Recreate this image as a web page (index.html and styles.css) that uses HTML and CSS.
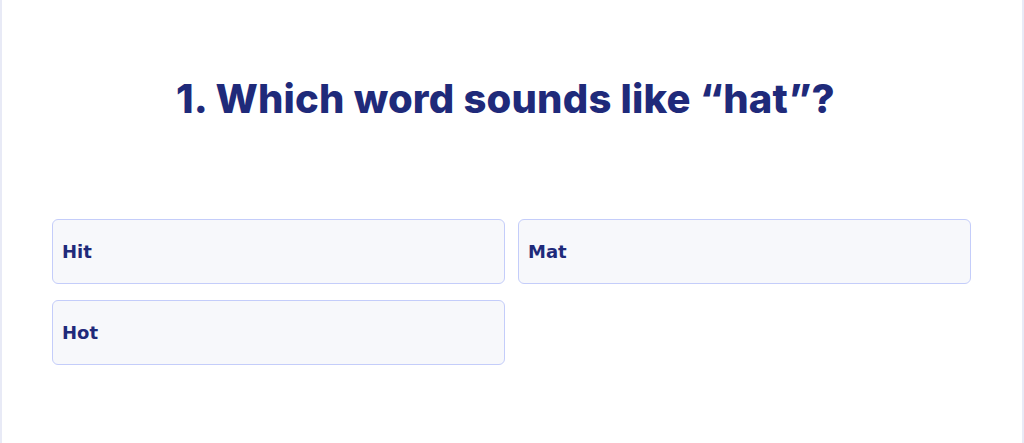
FILE: index.html
```html
<!DOCTYPE html>
<html lang="en">
<head>
    <meta charset="UTF-8">
    <title>Quiz</title>
    <link rel="stylesheet" href="styles.css">
</head>
<body>
    <div class="quiz-page">
        <h1 class="question">1. Which word sounds like “hat”?</h1>
        <div class="answers">
            <button class="answer">Hit</button>
            <button class="answer">Mat</button>
            <button class="answer">Hot</button>
        </div>
    </div>
</body>
</html>
```
FILE: styles.css
```css
body {
    margin: 0;
    padding: 0;
    background: #fff;
    height: 100vh;
}
.quiz-page {
    height: 100vh;
    box-sizing: border-box;
    border-left: 2px solid #e8eaf6;
    border-right: 2px solid #e8eaf6;
    padding: 0 51px 0 50px;
}
.question {
    margin: 0;
    padding-top: 74px;
    padding-right: 12px;
    height: 219px;
    box-sizing: border-box;
    text-align: center;
    font-family: Inter, 'Noto Sans', sans-serif;
    font-weight: 800;
    font-size: 40px;
    letter-spacing: 0.2px;
    color: #1f2a7a;
}
.answers {
    display: grid;
    grid-template-columns: 1fr 1fr;
    column-gap: 13px;
    row-gap: 16px;
}
.answer {
    height: 65px;
    text-align: left;
    padding: 0 9px;
    background: #f7f8fb;
    border: 1.5px solid #c4cdfa;
    border-radius: 6px;
    font-family: 'DejaVu Sans', sans-serif;
    font-weight: bold;
    font-size: 18px;
    color: #1f2a7a;
    cursor: pointer;
}
```
